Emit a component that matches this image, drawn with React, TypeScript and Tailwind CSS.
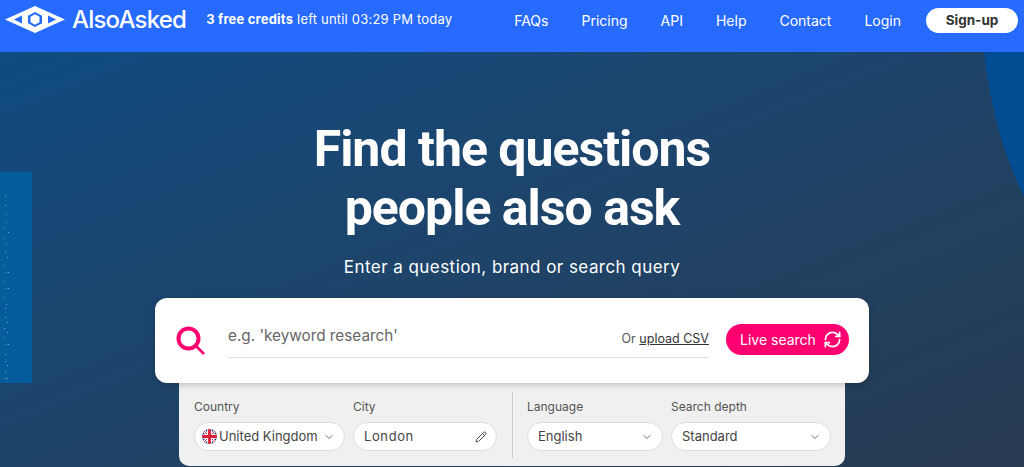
import { ChevronDown, Pencil, RefreshCw } from 'lucide-react'

const links = ['FAQs', 'Pricing', 'API', 'Help', 'Contact', 'Login']

// specks in the left strip: [x, y] inside the 32x211 band
const lightDots = [[5, 23], [5, 33], [6, 42], [6, 50], [4, 56], [8, 60], [4, 66], [6, 72], [5, 79], [7, 85], [4, 93], [6, 100], [8, 100], [4, 109], [6, 116], [8, 116], [4, 125], [6, 132], [5, 136], [5, 145], [7, 150], [4, 156], [7, 160], [4, 165], [6, 172], [8, 172], [5, 182], [5, 189], [7, 193], [5, 199], [5, 206], [7, 206]]
const darkDots = [[26, 28], [24, 36], [27, 44], [24, 52], [27, 60], [25, 68], [27, 76], [24, 84], [27, 92], [25, 100], [27, 108], [24, 116], [27, 124], [25, 132], [27, 140], [24, 148], [27, 156], [25, 164], [27, 172], [24, 180], [27, 188], [25, 196], [27, 204]]

function Logo() {
  return (
    <svg width="60" height="28" viewBox="0 0 60 28" className="shrink-0">
      <path fill="#fff" d="M30 0 60 13.5 30 27 0 13.5Z" />
      <path fill="#266aff" d="M9 13.5 17 9.5V17.5ZM51 13.5 43 9.5V17.5ZM30 6l7 3.75v7.5L30 21l-7-3.75v-7.5Z" />
      <path fill="#fff" d="M30 8.25l4.5 2.5v5.5L30 18.75l-4.5-2.5v-5.5Z" />
    </svg>
  )
}

function Flag() {
  return (
    <svg width="15" height="15" viewBox="0 0 16 16" className="shrink-0">
      <clipPath id="flag">
        <circle cx="8" cy="8" r="8" />
      </clipPath>
      <g clipPath="url(#flag)">
        <rect width="16" height="16" fill="#1f3a7a" />
        <path d="M0 0 16 16M16 0 0 16" stroke="#fff" strokeWidth="3" />
        <path d="M0 0 16 16M16 0 0 16" stroke="#d8203a" strokeWidth="1" />
        <path d="M8 0V16M0 8H16" stroke="#fff" strokeWidth="5" />
        <path d="M8 0V16M0 8H16" stroke="#d8203a" strokeWidth="3" />
      </g>
    </svg>
  )
}

function Field({ label, width, children }: { label: string; width: string; children: React.ReactNode }) {
  return (
    <div className={`flex flex-col ${width}`}>
      <span className="mb-[7px] text-[12px] leading-[16px] text-[#555]">{label}</span>
      <div className="flex h-[29px] items-center rounded-full border border-[#dcdcdc] bg-white text-[13px] text-[#444]">
        {children}
      </div>
    </div>
  )
}

export default function App() {
  return (
    <div className="flex h-[467px] w-[1024px] flex-col overflow-hidden font-['Inter',sans-serif]">
      <header className="flex h-[52px] shrink-0 items-center bg-[#266aff] pb-[12px] pl-[5px] pr-[6px] text-white">
        <Logo />
        <span className="ml-[7px] text-[24px] font-medium leading-none tracking-[-0.8px]">AlsoAsked</span>
        <p className="ml-[20px] text-[13px] tracking-[0.2px]">
          <b className="font-bold">3 free credits</b> left until 03:29 PM today
        </p>
        <nav className="ml-auto flex items-center gap-[33px] text-[14px]">
          {links.map((link) => (
            <a key={link}>{link}</a>
          ))}
          <a className="-ml-[8px] flex h-[25px] w-[92px] items-center justify-center rounded-full bg-white text-[13.5px] font-bold text-[#333]">
            Sign-up
          </a>
        </nav>
      </header>

      <main className="relative flex flex-1 flex-col items-center overflow-hidden bg-gradient-to-br from-[#0f4c81] to-[#263a50]">
        <svg width="40" height="144" viewBox="0 0 40 144" className="absolute right-0 top-0">
          <path d="M0 0Q10 85 40 144V0Z" fill="#024c94" />
        </svg>
        <svg width="32" height="211" viewBox="0 0 32 211" className="absolute left-0 top-[120px]">
          <rect width="32" height="211" fill="#035d9c" />
          {lightDots.map(([x, y]) => (
            <rect key={`l${x}-${y}`} x={x} y={y} width="1" height="1" fill="#6fa8c9" />
          ))}
          {darkDots.map(([x, y]) => (
            <rect key={`d${x}-${y}`} x={x} y={y} width="1" height="1" fill="#0c4f85" />
          ))}
        </svg>

        <h1 className="relative mt-[68px] text-center font-['Roboto',sans-serif] text-[50px] font-bold leading-[59px] tracking-[-1px] text-white">
          Find the questions
          <br />
          people also ask
        </h1>
        <p className="relative mt-[17px] text-[17px] leading-[24px] tracking-[0.45px] text-white">
          Enter a question, brand or search query
        </p>

        <div className="relative z-10 mt-[19px] flex h-[85px] w-[714px] items-center rounded-[12px] bg-white pl-[21px] pr-[20px] shadow-[0_2px_6px_rgba(0,0,0,0.2)]">
          <svg width="30" height="30" viewBox="0 0 30 30" fill="none" stroke="#ff0070" className="shrink-0">
            <circle cx="12.5" cy="12.5" r="10" strokeWidth="4" />
            <path d="M20.5 20.5l7.5 7.5" strokeWidth="2.6" />
          </svg>
          <div className="ml-[22px] flex h-[35px] w-[481px] items-center justify-between border-b border-[#ddd] pb-[8px]">
            <span className="text-[15.3px] text-[#666]">e.g. 'keyword research'</span>
            <span className="mt-[6px] text-[12.5px] text-[#555]">
              Or <span className="text-[#333] underline">upload CSV</span>
            </span>
          </div>
          <button className="mb-[2px] ml-auto flex h-[31px] w-[123px] items-center gap-[7px] rounded-full bg-[#ff0070] pl-[14px] text-[14px] text-white">
            Live search
            <RefreshCw size={19} strokeWidth={2.2} />
          </button>
        </div>

        <div className="relative flex h-[83px] w-[666px] items-start rounded-b-[10px] bg-[#f0f0f0] pl-[15px] pt-[16px]">
          <div className="flex gap-[8px]">
            <Field label="Country" width="w-[151px]">
              <span className="ml-[7px]"><Flag /></span>
              <span className="ml-[2px] truncate">United Kingdom</span>
              <ChevronDown size={12} strokeWidth={1.6} className="ml-auto mr-[9px] shrink-0" />
            </Field>
            <Field label="City" width="w-[144px]">
              <span className="ml-[10px] tracking-[0.6px]">London</span>
              <Pencil size={12} className="ml-auto mr-[9px]" />
            </Field>
          </div>
          <div className="-mt-[7px] ml-[15px] h-[66px] w-px bg-[#ccc]" />
          <div className="ml-[14px] flex gap-[8px]">
            <Field label="Language" width="w-[136px]">
              <span className="ml-[10px]">English</span>
              <ChevronDown size={12} strokeWidth={1.6} className="ml-auto mr-[9px]" />
            </Field>
            <Field label="Search depth" width="w-[160px]">
              <span className="ml-[10px]">Standard</span>
              <ChevronDown size={12} strokeWidth={1.6} className="ml-auto mr-[9px]" />
            </Field>
          </div>
        </div>
      </main>
    </div>
  )
}
